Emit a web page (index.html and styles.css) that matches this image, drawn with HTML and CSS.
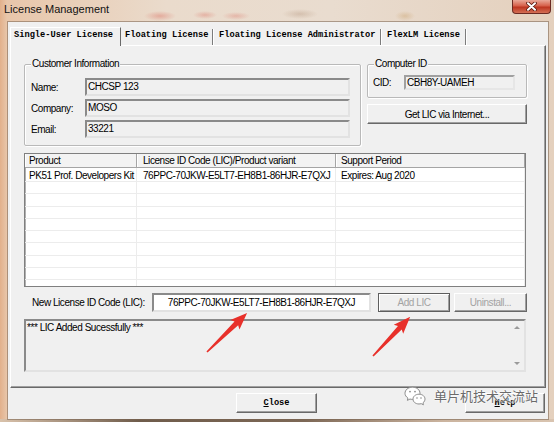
FILE: index.html
```html
<!DOCTYPE html>
<html>
<head>
<meta charset="utf-8">
<link rel="stylesheet" href="styles.css">
</head>
<body>
<div class="window">
  <div class="titlebar">
    <span class="title">License Management</span>
    <div class="close-btn">
      <svg width="11" height="9" viewBox="0 0 11 9"><path d="M2 1.2 L9 7.8 M9 1.2 L2 7.8" stroke="#5a1a10" stroke-width="3.6" stroke-linecap="round"/><path d="M2 1.2 L9 7.8 M9 1.2 L2 7.8" stroke="#fff" stroke-width="2" stroke-linecap="round"/></svg>
    </div>
  </div>
  <div class="client">
    <div class="tabs">
      <div class="tab active t1">Single-User License</div>
      <div class="tab t2">Floating License</div>
      <div class="tab t3">Floating License Administrator</div>
      <div class="tab t4">FlexLM License</div>
    </div>
    <div class="panel">
      <div class="top">
        <div class="group cust">
          <span class="legend">Customer Information</span>
          <div class="frow"><span class="lbl">Name:</span><div class="field">CHCSP 123</div></div>
          <div class="frow"><span class="lbl">Company:</span><div class="field">MOSO</div></div>
          <div class="frow"><span class="lbl">Email:</span><div class="field">33221</div></div>
        </div>
        <div class="rcol">
          <div class="group cid">
            <span class="legend">Computer ID</span>
            <div class="frow small"><span class="lbl cidlbl">CID:</span><div class="field cidfield">CBH8Y-UAMEH</div></div>
          </div>
          <div class="btn getlic">Get LIC via Internet...</div>
        </div>
      </div>
      <div class="list">
        <div class="lrow head"><div class="c1">Product</div><div class="c2">License ID Code (LIC)/Product variant</div><div class="c3">Support Period</div></div>
        <div class="lrow first"><div class="c1">PK51 Prof. Developers Kit</div><div class="c2">76PPC-70JKW-E5LT7-EH8B1-86HJR-E7QXJ</div><div class="c3">Expires: Aug 2020</div></div>
        <div class="lrow"><div class="c1"></div><div class="c2"></div><div class="c3"></div></div>
        <div class="lrow"><div class="c1"></div><div class="c2"></div><div class="c3"></div></div>
        <div class="lrow"><div class="c1"></div><div class="c2"></div><div class="c3"></div></div>
        <div class="lrow"><div class="c1"></div><div class="c2"></div><div class="c3"></div></div>
        <div class="lrow"><div class="c1"></div><div class="c2"></div><div class="c3"></div></div>
        <div class="lrow"><div class="c1"></div><div class="c2"></div><div class="c3"></div></div>
        <div class="lrow"><div class="c1"></div><div class="c2"></div><div class="c3"></div></div>
        <div class="lrow"><div class="c1"></div><div class="c2"></div><div class="c3"></div></div>
        <div class="lrow"><div class="c1"></div><div class="c2"></div><div class="c3"></div></div>
      </div>
      <div class="newrow">
        <span class="newlbl">New License ID Code (LIC):</span>
        <div class="input">76PPC-70JKW-E5LT7-EH8B1-86HJR-E7QXJ</div>
        <div class="btn addlic">Add LIC</div>
        <div class="btn uninst">Uninstall...</div>
      </div>
      <div class="msg">
        <div class="msgtext">*** LIC Added Sucessfully ***</div>
        <div class="sbar"><span class="up"></span><span class="down"></span></div>
      </div>
    </div>
    <div class="bottom">
      <div class="btn mono closeb"><span><u>C</u>lose</span></div>
      <div class="btn mono helpb"><span><u>H</u>elp</span></div>
    </div>
  </div>

  <svg class="arrows" width="554" height="422" viewBox="0 0 554 422">
    <polygon transform="translate(207,352) rotate(-44.3)" points="0,-0.8 41,-2.6 39,-6.5 56,0 39,6.5 41,2.6 0,0.8" fill="#e8302a"/>
    <polygon transform="translate(373,356) rotate(-46.5)" points="0,-0.8 39,-2.6 37,-6.5 54,0 37,6.5 39,2.6 0,0.8" fill="#e8302a"/>
  </svg>

  <div class="watermark">
    <svg class="wx" width="22" height="20" viewBox="0 0 22 20">
      <path d="M8.5 1.2 C12.8 1.2 16 3.9 16 7.3 C16 10.7 12.8 13.4 8.5 13.4 C7.6 13.4 6.8 13.3 6 13 L3.4 14.4 L3.9 12 C2.1 10.9 1 9.2 1 7.3 C1 3.9 4.2 1.2 8.5 1.2 Z" fill="#fff" stroke="#8c8c8c" stroke-width="1"/>
      <circle cx="6" cy="5.6" r="0.9" fill="#8c8c8c"/><circle cx="11" cy="5.6" r="0.9" fill="#8c8c8c"/>
      <path d="M15 8.2 C18.5 8.2 21 10.4 21 13.1 C21 14.6 20.2 15.9 19 16.8 L19.4 18.8 L17.3 17.7 C16.6 17.9 15.8 18 15 18 C11.5 18 9 15.8 9 13.1 C9 10.4 11.5 8.2 15 8.2 Z" fill="#fff" stroke="#8c8c8c" stroke-width="1"/>
      <circle cx="13" cy="12" r="0.8" fill="#8c8c8c"/><circle cx="17" cy="12" r="0.8" fill="#8c8c8c"/>
    </svg>
    <span class="wtext">单片机技术交流站</span>
  </div>
</div>
</body>
</html>
```

FILE: styles.css
```css
html, body {
  margin: 0;
  padding: 0;
}
body {
  width: 554px;
  height: 422px;
  overflow: hidden;
  font-family: "Liberation Sans", Arial, sans-serif;
  font-size: 10px;
  letter-spacing: -0.45px;
  color: #000;
}
.window {
  position: relative;
  width: 554px;
  height: 422px;
  background:
    linear-gradient(90deg, #d9c2ab, #6f5c4b 25%, #7d6856 55%, #cbb49f 80%, #d9c4b0) 0 419px / 554px 3px no-repeat,
    radial-gradient(ellipse 16px 5px at 160px 16px, rgba(214, 84, 70, .35), transparent),
    radial-gradient(ellipse 12px 4px at 205px 15px, rgba(214, 84, 70, .3), transparent),
    radial-gradient(ellipse 14px 4px at 236px 16px, rgba(214, 84, 70, .28), transparent),
    radial-gradient(ellipse 18px 5px at 300px 14px, rgba(150, 110, 80, .25), transparent),
    radial-gradient(ellipse 10px 5px at 405px 16px, rgba(190, 140, 70, .3), transparent),
    linear-gradient(90deg, #e2b08b 0, #e8c6aa 7px, #eadbcc 30%, #e9dccf 60%, #e4d0bd 100%);
}
.titlebar {
  display: flex;
  height: 22px;
}
.title {
  font-size: 11px;
  letter-spacing: 0;
  line-height: 18px;
  padding-left: 4px;
  color: #111;
}
.close-btn {
  margin-left: auto;
  margin-right: 3px;
  width: 39px;
  height: 14px;
  box-sizing: border-box;
  border: 1px solid #6b2a22;
  border-top: none;
  border-radius: 0 0 4px 4px;
  background: linear-gradient(#e9a898, #d6604a 45%, #bd3520 55%, #d36f55);
  display: flex;
  align-items: center;
  justify-content: center;
}
.client {
  margin-left: 8px;
  width: 540px;
  height: 397px;
  box-sizing: border-box;
  background: #f0f0f0;
  padding: 5px 0 0 2px;
  box-shadow: 0 0 0 1px rgba(120, 98, 80, .55);
}
.tabs {
  display: flex;
  height: 18px;
  position: relative;
  z-index: 1;
  font-family: "Liberation Mono", "DejaVu Sans Mono", monospace;
  font-size: 8.7px;
  font-weight: bold;
  letter-spacing: 0;
}
.tab {
  box-sizing: border-box;
  white-space: nowrap;
  margin-top: 2px;
  height: 16px;
  line-height: 13px;
  border-right: 1px solid #7c7c7c;
  box-shadow: 1px 0 0 #fff;
}
.tab.active {
  margin-top: 0;
  height: 19px;
  line-height: 15px;
  background: #f0f0f0;
  border-top: 1px solid #fff;
  border-left: 1px solid #fff;
  border-right: 1px solid #696969;
  box-shadow: none;
}
.t1 { width: 111px; padding-left: 3px; }
.t2 { width: 92px; padding-left: 4px; }
.t3 { width: 168px; padding-left: 6px; }
.t4 { width: 85px; padding-left: 6px; }
.panel {
  width: 536px;
  height: 343px;
  box-sizing: border-box;
  border: 1px solid;
  border-color: #fff #696969 #696969 #fff;
  box-shadow: inset -1px -1px 0 #a0a0a0;
  padding: 18px 0 0 13px;
}
.top {
  display: flex;
  gap: 6px;
  align-items: flex-start;
}
.group {
  position: relative;
  box-sizing: border-box;
  border: 1px solid #b9b9b9;
  border-radius: 2px;
  box-shadow: inset 1px 1px 0 #fff, 1px 1px 0 #fff;
}
.legend {
  position: absolute;
  top: -7px;
  left: 6px;
  padding: 0 1px;
  background: #f0f0f0;
  line-height: 12px;
}
.cust {
  width: 337px;
  height: 82px;
  padding: 13px 0 0 6px;
  display: flex;
  flex-direction: column;
  gap: 3px;
}
.frow {
  display: flex;
  align-items: center;
  height: 18px;
}
.lbl {
  width: 54px;
}
.field {
  width: 265px;
  height: 18px;
  box-sizing: border-box;
  border: 2px solid;
  border-color: #8a8a8a #e2e2e2 #e2e2e2 #8a8a8a;
  background: #f0f0f0;
  padding-left: 1px;
  line-height: 14px;
  white-space: nowrap;
}
.rcol {
  width: 160px;
  display: flex;
  flex-direction: column;
  gap: 6px;
}
.cid {
  height: 34px;
  padding: 10px 0 0 5px;
}
.frow.small {
  height: 15px;
}
.cidlbl {
  width: 31px;
}
.cidfield {
  width: 111px;
  height: 15px;
  line-height: 11px;
  border-color: #a0a0a0 #e6e6e6 #e6e6e6 #a0a0a0;
  padding-left: 1px;
}
.btn {
  box-sizing: border-box;
  background: #f0f0f0;
  border: 1px solid;
  border-color: #fff #696969 #696969 #fff;
  box-shadow: inset -1px -1px 0 #a0a0a0;
  display: flex;
  align-items: center;
  justify-content: center;
  height: 20px;
  white-space: nowrap;
}
.getlic {
  width: 160px;
}
.list {
  margin-top: 7px;
  width: 502px;
  height: 134px;
  box-sizing: border-box;
  border: 1px solid #7f7f7f;
  box-shadow: inset 1px 1px 0 #b0b0b0;
  background: #fff;
  overflow: hidden;
}
.lrow {
  display: flex;
  height: 12.3px;
}
.lrow > div {
  box-sizing: border-box;
  border-right: 1px solid #ececec;
  border-bottom: 1px solid #ececec;
  white-space: nowrap;
}
.c1 { width: 112px; padding-left: 4px; }
.c2 { width: 199px; padding-left: 6px; }
.c3 { flex: 1; padding-left: 5px; }
.lrow.head {
  height: 14px;
  background: #f3f3f3;
}
.lrow.head > div {
  line-height: 13px;
  border-right: 1px solid #a5a5a5;
  border-bottom: 1px solid #a5a5a5;
  box-shadow: inset 1px 0 0 #fff;
}
.lrow.first {
  height: 14px;
}
.lrow.first > div {
  line-height: 15px;
}
.newrow {
  display: flex;
  align-items: center;
  margin-top: 6px;
  height: 19px;
}
.newlbl {
  width: 128px;
  box-sizing: border-box;
  padding-left: 8px;
  white-space: nowrap;
}
.input {
  width: 219px;
  height: 19px;
  box-sizing: border-box;
  border: 2px solid;
  border-color: #8a8a8a #e2e2e2 #e2e2e2 #8a8a8a;
  background: #fff;
  text-align: center;
  line-height: 15px;
  white-space: nowrap;
}
.addlic {
  margin-left: 7px;
  width: 72px;
  height: 19px;
  color: #a3a3a3;
  border: 1px solid #5e5e5e;
  box-shadow: inset 1px 1px 0 #fff, inset -1px -1px 0 #a0a0a0;
}
.uninst {
  margin-left: 4px;
  width: 73px;
  height: 19px;
  color: #a3a3a3;
}
.msg {
  margin-top: 7px;
  width: 502px;
  height: 53px;
  display: flex;
  box-sizing: border-box;
  border: 2px solid;
  border-color: #8a8a8a #e2e2e2 #e2e2e2 #8a8a8a;
  background: #f0f0f0;
}
.msgtext {
  flex: 1;
  padding: 0 0 0 1px;
  line-height: 13px;
}
.sbar {
  width: 14px;
  display: flex;
  flex-direction: column;
  justify-content: space-between;
  align-items: center;
  padding: 5px 0 5px;
  box-sizing: border-box;
}
.up, .down {
  width: 0;
  height: 0;
  border-left: 3px solid transparent;
  border-right: 3px solid transparent;
}
.up {
  border-bottom: 3px solid #9a9a9a;
}
.down {
  border-top: 3px solid #9a9a9a;
}
.bottom {
  display: flex;
  margin-top: 5px;
}
.mono {
  font-family: "Liberation Mono", "DejaVu Sans Mono", monospace;
  font-size: 8.7px;
  font-weight: bold;
  letter-spacing: 0;
}
.closeb {
  margin-left: 226px;
  width: 81px;
}
.helpb {
  margin-left: 148px;
  width: 80px;
}
.arrows {
  position: absolute;
  left: 0;
  top: 0;
  pointer-events: none;
}
.watermark {
  position: absolute;
  left: 404px;
  top: 386px;
  display: flex;
  align-items: center;
  gap: 8px;
  pointer-events: none;
}
.wtext {
  font-family: "Noto Sans CJK SC", sans-serif;
  font-size: 13px;
  letter-spacing: 0;
  color: #6b6b6b;
  line-height: 20px;
  text-shadow: 0 0 2px #fff, 0 0 2px #fff, 0 0 1px #fff;
}
```
